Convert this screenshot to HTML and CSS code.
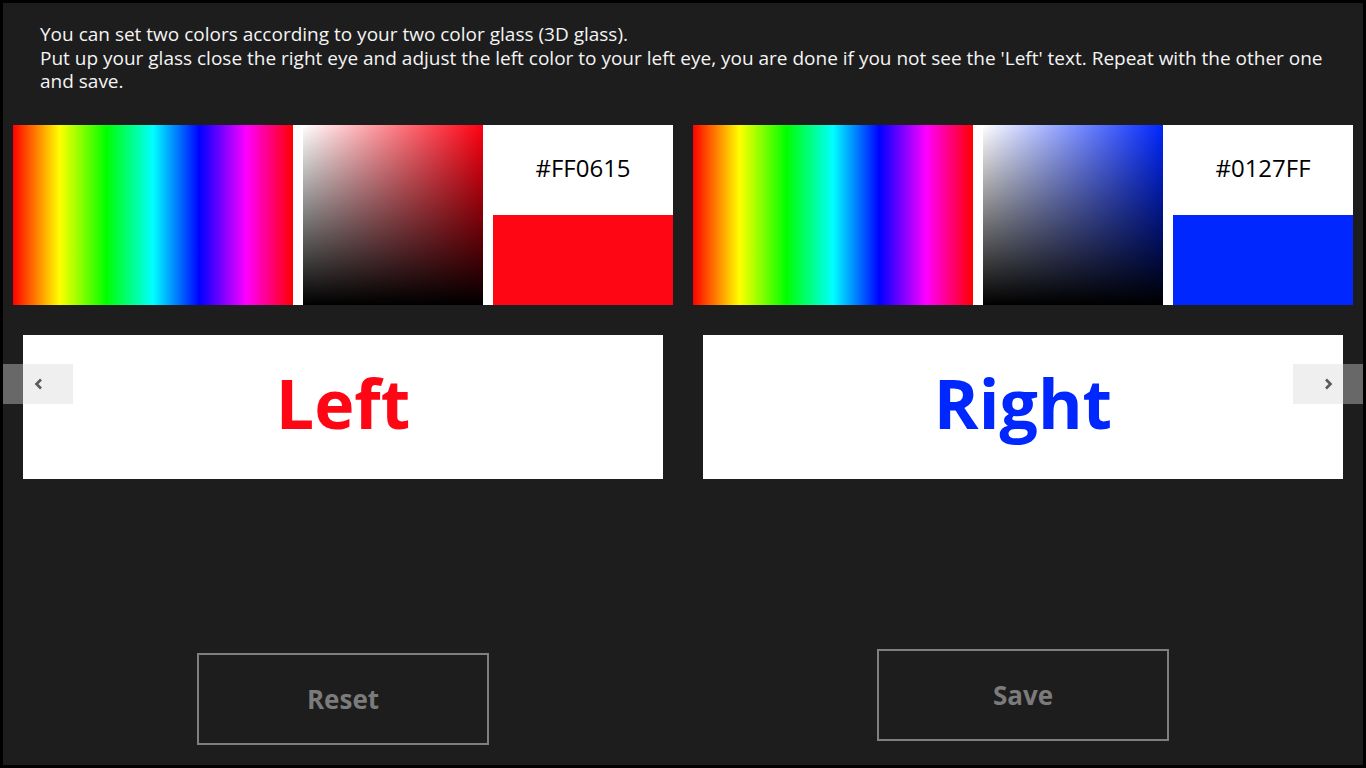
FILE: index.html
```html
<!DOCTYPE html>
<html lang="en">
<head>
    <meta charset="UTF-8">
    <meta name="viewport" content="width=device-width, initial-scale=1.0">
    <title>Color Glass Settings</title>
    <link rel="stylesheet" href="styles.css">
</head>
<body>

    <div class="app">
        <p class="intro">
            You can set two colors according to your two color glass (3D glass).<br>
            Put up your glass close the right eye and adjust the left color to your left eye, you are done if you not see the 'Left' text. Repeat with the other one and save.
        </p>

        <div class="columns">
            <div class="column">
                <div class="picker">
                    <div class="spectrum"></div>
                    <div class="sv sv-red"></div>
                    <div class="preview">
                        <div class="hex">#FF0615</div>
                        <div class="swatch swatch-red"></div>
                    </div>
                </div>
                <div class="label-box">
                    <span class="eye-label label-red">Left</span>
                </div>
                <div class="actions">
                    <button class="action-btn">Reset</button>
                </div>
            </div>

            <div class="column">
                <div class="picker">
                    <div class="spectrum"></div>
                    <div class="sv sv-blue"></div>
                    <div class="preview">
                        <div class="hex">#0127FF</div>
                        <div class="swatch swatch-blue"></div>
                    </div>
                </div>
                <div class="label-box">
                    <span class="eye-label label-blue">Right</span>
                </div>
                <div class="actions actions-save">
                    <button class="action-btn">Save</button>
                </div>
            </div>
        </div>

        <!-- flip view arrows -->
        <div class="flip flip-prev">
            <span class="flip-edge"></span>
            <span class="flip-btn">
                <svg width="10" height="12" viewBox="0 0 10 12"><polyline points="7,1.5 2.5,6 7,10.5" fill="none" stroke="#5a5a5a" stroke-width="2.6"/></svg>
            </span>
        </div>
        <div class="flip flip-next">
            <span class="flip-btn">
                <svg width="10" height="12" viewBox="0 0 10 12"><polyline points="3,1.5 7.5,6 3,10.5" fill="none" stroke="#5a5a5a" stroke-width="2.6"/></svg>
            </span>
            <span class="flip-edge"></span>
        </div>
    </div>

</body>
</html>
```

FILE: styles.css
```css
html, body {
    height: 100%;
}

body {
    margin: 0;
    padding: 3px;
    box-sizing: border-box;
    background-color: #000;
    font-family: "Open Sans", "Noto Sans", Arial, sans-serif;
    color: white;
}

.app {
    position: relative;
    height: 100%;
    background-color: #1d1d1d;
    overflow: hidden;
}

.intro {
    margin: 0;
    padding: 20px 30px 0 37px;
    font-size: 19px;
    line-height: 23.5px;
    color: #f4f4f4;
}

.columns {
    display: grid;
    grid-template-columns: 680px 680px;
    margin-top: 31px;
}

.column {
    padding: 0 10px;
}

.picker {
    display: flex;
    height: 180px;
    background-color: white;
}

.spectrum {
    width: 280px;
    background: linear-gradient(to right, #f00, #ff0, #0f0, #0ff, #00f, #f0f, #f00);
}

.sv {
    width: 180px;
    margin-left: 10px;
}

.sv-red {
    background: linear-gradient(to bottom, rgba(0, 0, 0, 0), #000),
                linear-gradient(to right, #fff, hsl(356, 100%, 50%));
}

.sv-blue {
    background: linear-gradient(to bottom, rgba(0, 0, 0, 0), #000),
                linear-gradient(to right, #fff, hsl(231, 100%, 50%));
}

.preview {
    flex: 1;
    margin-left: 10px;
    display: flex;
    flex-direction: column;
}

.hex {
    height: 90px;
    display: flex;
    justify-content: center;
    align-items: center;
    padding-bottom: 4px;
    box-sizing: border-box;
    color: black;
    font-size: 24px;
}

.swatch {
    height: 90px;
}

.swatch-red {
    background-color: #ff0615;
}

.swatch-blue {
    background-color: #0127ff;
}

.label-box {
    margin: 30px 10px 0;
    height: 144px;
    background-color: white;
    display: flex;
    justify-content: center;
    align-items: center;
}

.eye-label {
    font-size: 68px;
    font-weight: bold;
    line-height: 1;
    margin-top: -8px;
}

.label-red {
    color: #ff0615;
}

.label-blue {
    color: #0127ff;
}

.actions {
    display: flex;
    justify-content: center;
    margin-top: 174px;
}

.actions-save {
    margin-top: 170px;
}

.action-btn {
    width: 292px;
    height: 92px;
    background: transparent;
    border: 2px solid #7f7f7f;
    color: #7b7b7b;
    font-family: inherit;
    font-size: 26px;
    font-weight: bold;
    padding: 0;
}

.flip {
    position: absolute;
    top: 361px;
    display: flex;
    height: 40px;
}

.flip-prev {
    left: 0;
}

.flip-next {
    right: 0;
}

.flip-edge {
    width: 20px;
    background-color: #686868;
}

.flip-btn {
    width: 50px;
    background-color: #efefef;
    display: flex;
    align-items: center;
}

.flip-prev .flip-btn {
    padding-left: 11px;
    box-sizing: border-box;
}

.flip-next .flip-btn {
    justify-content: flex-end;
    padding-right: 10px;
    box-sizing: border-box;
}
```
